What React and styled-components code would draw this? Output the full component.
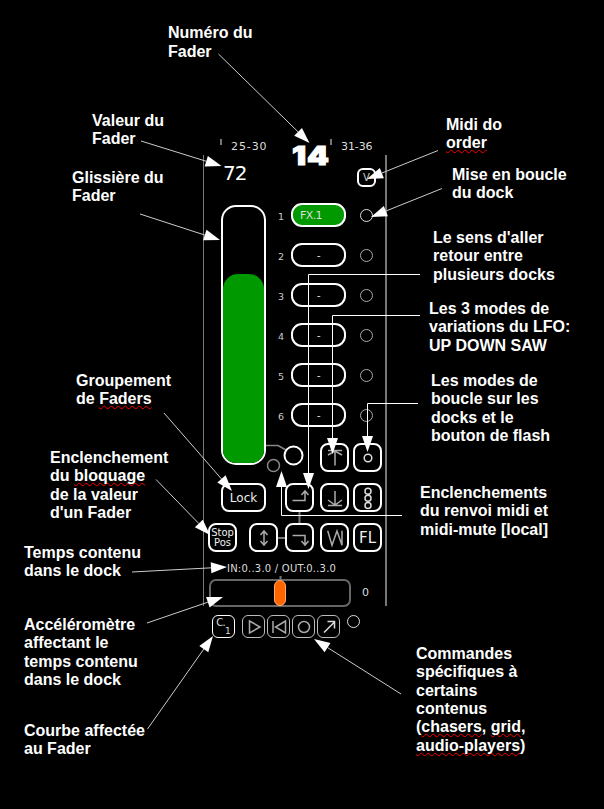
import React from "react";
import styled, { createGlobalStyle } from "styled-components";

const GlobalStyle = createGlobalStyle`
  *, *::before, *::after { box-sizing: border-box; }
  body { margin: 0; background: #000; }
`;

const Page = styled.main`
  position: relative;
  width: 604px;
  height: 809px;
  overflow: hidden;
  background: #000;
  color: #fff;
  font-family: "Liberation Sans", Arial, sans-serif;
`;

const TopArea = styled.header`
  height: 80px;
  padding: 24.4px 0 0 168px;
`;

const Columns = styled.div`
  display: grid;
  grid-template-columns: 203px 184px 1fr;
  height: 729px;
`;

const Notes = styled.div`
  display: flex;
  flex-direction: column;
  align-items: flex-start;
  padding-top: 0.7px;
`;

const Note = styled.p`
  margin: ${(p) => p.$gap || 0}px 0 0 ${(p) => p.$indent || 0}px;
  font-size: 16px;
  font-weight: 700;
  line-height: 18.4px;
  white-space: nowrap;
`;

const Line = styled.span`
  display: block;
  height: 18.4px;
`;

const Misspelt = styled.span`
  text-decoration: underline wavy #f00 1px;
  text-decoration-skip-ink: none;
  text-underline-offset: 1px;
`;

/* ---- fader strip ---- */

const Strip = styled.section`
  display: flex;
  flex-direction: column;
  padding-top: 59px;
  font-family: "DejaVu Sans", sans-serif;
`;

const StripHeader = styled.div`
  display: flex;
  height: 16px;
  padding-left: 17px;
  font-size: 11px;
  line-height: 15px;
  color: #ddd;
`;

const Tick = styled.i`
  width: 2px;
  height: 6px;
  background: #777;
`;

const Range = styled.span`
  width: ${(p) => p.$width}px;
  margin-left: ${(p) => p.$gap}px;
  white-space: nowrap;
  letter-spacing: ${(p) => p.$track}px;
`;

const FaderNumber = styled.strong`
  width: 38px;
  height: 16px;
  font-family: Inter, "DejaVu Sans", sans-serif;
  font-weight: 900;
  font-size: 26px;
  line-height: 33px;
  letter-spacing: 0.8px;
  color: #fff;
  -webkit-text-stroke: 1px #fff;
  transform: scaleX(1.2);
  transform-origin: left;
`;

const Frame = styled.div`
  display: flex;
  flex-direction: column;
  height: 451px;
  border-left: 1px solid #777;
  border-right: 2px solid #777;
`;

const ValueRow = styled.div`
  display: flex;
  flex: none;
  justify-content: space-between;
  height: 48px;
  padding: 7px 9px 0 19px;
`;

const Value = styled.span`
  font-size: 20px;
  line-height: 23px;
  letter-spacing: -0.9px;
`;

const MidiOrder = styled.button`
  width: 19px;
  height: 19px;
  margin-top: 6px;
  padding: 0;
  border: 2px solid #fff;
  border-radius: 6px;
  background: none;
  color: #ccc;
  font: 10px/15px "DejaVu Sans", sans-serif;
`;

const Body = styled.div`
  display: flex;
  flex: none;
  height: 320px;
`;

const SliderColumn = styled.div`
  display: flex;
  flex-direction: column;
  gap: 18px;
  width: 62px;
  padding: 2px 0 0 17px;
`;

const Slider = styled.div`
  display: flex;
  align-items: flex-end;
  flex: none;
  width: 45px;
  height: 260px;
  border: 2px solid #fff;
  border-radius: 15px;
  overflow: hidden;
`;

const SliderFill = styled.div`
  width: 100%;
  background: #009900;
  border-radius: 15px 15px 0 0;
`;

const DockColumn = styled.div`
  display: flex;
  flex-direction: column;
  flex: 1;
`;

const DockRow = styled.div`
  display: flex;
  align-items: center;
  height: 24px;
  margin-bottom: 16px;
  padding-left: 12px;
`;

const DockIndex = styled.span`
  width: 13px;
  padding-top: 3px;
  font-size: 9.5px;
  line-height: 12px;
  color: #ccc;
`;

const Dock = styled.button`
  width: 55px;
  height: 24px;
  padding: ${(p) => (p.$active ? "2px 15px 0 0" : "1px 0 0")};
  border: 2px solid #fff;
  border-radius: 11px;
  background: ${(p) => (p.$active ? "#009900" : "none")};
  color: #ddd;
  font: 11px/18px "DejaVu Sans", sans-serif;
  letter-spacing: -0.6px;
`;

const Ring = styled.i`
  flex: none;
  width: 13px;
  height: 13px;
  margin-left: ${(p) => p.$gap || 0}px;
  border: 1.5px solid ${(p) => (p.$bright ? "#ddd" : "#aaa")};
  border-radius: 50%;
`;

const ButtonRow = styled.div`
  display: flex;
  flex: none;
  align-items: flex-start;
  height: 40px;
`;

const Key = styled.button`
  display: flex;
  align-items: center;
  justify-content: center;
  flex: none;
  width: ${(p) => p.$width || 29}px;
  height: 29px;
  margin-left: ${(p) => p.$gap || 0}px;
  padding: 0;
  border: 2px solid #fff;
  border-radius: 8px;
  background: none;
  color: #eee;
  font: ${(p) => p.$size || 12}px/10px "DejaVu Sans", sans-serif;
`;

const Glyph = styled.svg`
  flex: none;
  display: block;
  fill: none;
  stroke: ${(p) => p.$tone || "#aaa"};
  stroke-width: 1.5;
  overflow: visible;
`;

const Joint = styled.i`
  width: 7px;
  height: 2px;
  margin-top: 14px;
  background: #777;
`;

const Timing = styled.div`
  flex: none;
  height: 16px;
  padding-left: 23px;
  font-size: 10px;
  line-height: 11px;
  letter-spacing: 0.22px;
  color: #ddd;
  white-space: nowrap;
`;

const AccelRow = styled.div`
  display: flex;
  flex: none;
  align-items: center;
  height: 28px;
  padding-left: 5px;
`;

const Accelerometer = styled.div`
  display: flex;
  justify-content: center;
  align-items: center;
  width: 142px;
  height: 28px;
  border: 2px solid #666;
  border-radius: 7px;
`;

const AccelHandle = styled.div`
  flex: none;
  width: 12px;
  height: 26px;
  border: 1px solid #ffab70;
  border-radius: 6px;
  background: #ff6600;
`;

const AccelValue = styled.span`
  margin-left: 11px;
  margin-top: -2px;
  font-size: 11px;
  color: #ddd;
`;

const Transport = styled.div`
  display: flex;
  padding: 9px 0 0 9px;
`;

const SmallKey = styled.button`
  display: flex;
  align-items: center;
  justify-content: center;
  width: 23px;
  height: 23px;
  margin-right: ${(p) => p.$after ?? 2}px;
  padding: 0;
  border: 1px solid ${(p) => (p.$bright ? "#fff" : "#bbb")};
  border-radius: 6px;
  background: none;
  color: #ddd;
  font: 10px/10px "DejaVu Sans", sans-serif;
`;

const CurveIndex = styled.sub`
  align-self: flex-end;
  padding-bottom: 1px;
  font-size: 9px;
  line-height: 10px;
`;

const CurveLetter = styled.span`
  align-self: flex-start;
  padding-top: 2px;
  letter-spacing: -0.8px;
`;

const Arrows = styled.svg`
  position: absolute;
  inset: 0;
  pointer-events: none;
`;

/* Each pointer is a list of points; the last one is the tip. */
const POINTERS = [
  [[218.5, 54], [309.5, 143]],
  [[141, 141], [221.5, 166]],
  [[140, 214], [220, 240]],
  [[164, 413], [232, 491]],
  [[156, 479.5], [210, 535]],
  [[132, 572], [227, 567]],
  [[147, 623], [223, 597]],
  [[147.5, 729], [213, 636]],
  [[438, 150.5], [367, 179]],
  [[442, 188.5], [371, 217]],
  [[401, 694], [314, 639]],
  [[420, 274.5], [308.5, 274.5], [308.5, 489]],
  [[420, 315.5], [332.5, 315.5], [332.5, 454]],
  [[418, 403.5], [367.5, 403.5], [367.5, 452]],
  [[402, 515.5], [281.5, 515.5], [281.5, 471]],
];

function Pointer({ points }) {
  const [x2, y2] = points[points.length - 1];
  const [x1, y1] = points[points.length - 2];
  const len = Math.hypot(x2 - x1, y2 - y1);
  const ux = (x2 - x1) / len;
  const uy = (y2 - y1) / len;
  const bx = x2 - ux * 16;
  const by = y2 - uy * 16;
  const straight = points.length > 2;
  const stem = [...points.slice(0, -1), [bx, by]].map((p) => p.join(",")).join(" ");
  const head = [
    [x2, y2],
    [bx - uy * 5.5, by + ux * 5.5],
    [bx + uy * 5.5, by - ux * 5.5],
  ].map((p) => p.join(",")).join(" ");
  return (
    <g>
      <polyline points={stem} fill="none" stroke={straight ? "#fff" : "#ccc"} strokeWidth="1" />
      <polygon points={head} fill="#fff" />
    </g>
  );
}

const ICONS = {
  up: "M10 17.500V3M3 7L10 3L17 7M3 2.500H17",
  down: "M10 3V17M3 12L10 17L17 12M3 17.500H17",
  dot: "M13.8 10a3.8 3.8 0 1 1-7.6 0a3.8 3.8 0 1 1 7.6 0Z",
  chain:
    "M13 3.200a3 3 0 1 1-6 0a3 3 0 1 1 6 0ZM13 10.300a3 3 0 1 1-6 0a3 3 0 1 1 6 0ZM13 17.400a3 3 0 1 1-6 0a3 3 0 1 1 6 0Z",
  forward: "M2.500 12.500H15V3.500M11.500 7L15 3L18.500 7",
  back: "M2.500 7.500H15V16.500M11.500 13L15 17L18.500 13",
  both: "M10 3V17M6.500 7L10 3L13.500 7M6.500 13L10 17L13.500 13",
  saw: "M2.700 2.700L7 17.300L12 3L17 17.300V2.700",
  play: "M5.500 4L16 10L5.500 16Z",
  prev: "M4 4V16M16.500 4L6.500 10L16.500 16Z",
  record: "M15.500 10a5.500 5.500 0 1 1-11 0a5.500 5.500 0 1 1 11 0Z",
  out: "M5 15.500L15.500 5M8.500 4.500H15.500V11.500",
};

function Icon({ name, tone }) {
  return (
    <Glyph width="20" height="20" viewBox="0 0 20 20" $tone={tone}>
      <path d={ICONS[name]} />
    </Glyph>
  );
}

function Annotation({ lines, gap, indent }) {
  return (
    <Note $gap={gap} $indent={indent}>
      {lines.map((line, i) => (
        <Line key={i}>
          {line.split(/(\*[^*]+\*)/).map((part, j) =>
            part.startsWith("*") ? <Misspelt key={j}>{part.slice(1, -1)}</Misspelt> : part
          )}
        </Line>
      ))}
    </Note>
  );
}

export default function App() {
  return (
    <Page>
      <GlobalStyle />
      <TopArea>
        <Annotation lines={["Numéro du", "Fader"]} />
      </TopArea>
      <Columns>
        <Notes>
          <Annotation gap={31.3} indent={92} lines={["Valeur du", "Fader"]} />
          <Annotation gap={20.2} indent={72} lines={["Glissière du", "Fader"]} />
          <Annotation gap={166.2} indent={76} lines={["Groupement", "de *Faders*"]} />
          <Annotation gap={40.2} indent={50} lines={["Enclenchement", "du *bloquage*", "de la valeur", "d'un Fader"]} />
          <Annotation gap={21.4} indent={24} lines={["Temps contenu", "dans le dock"]} />
          <Annotation gap={35.2} indent={24} lines={["Accéléromètre", "affectant le", "temps contenu", "dans le dock"]} />
          <Annotation gap={32.4} indent={24} lines={["Courbe affectée", "au Fader"]} />
        </Notes>

        <Strip>
          <StripHeader>
            <Tick />
            <Range $width={61} $gap={9} $track={0.9}>25-30</Range>
            <FaderNumber>14</FaderNumber>
            <Tick />
            <Range $width={34} $gap={9} $track={-0.1}>31-36</Range>
          </StripHeader>
          <Frame>
            <ValueRow>
              <Value>72</Value>
              <MidiOrder>V</MidiOrder>
            </ValueRow>
            <Body>
              <SliderColumn>
                <Slider>
                  <SliderFill style={{ height: `${(189 / 256) * 100}%` }} />
                </Slider>
                <Key $width={45}>Lock</Key>
              </SliderColumn>
              <DockColumn>
                {["FX.1", "-", "-", "-", "-", "-"].map((name, i) => (
                  <DockRow key={i}>
                    <DockIndex>{i + 1}</DockIndex>
                    <Dock $active={i === 0}>{name}</Dock>
                    <Ring $gap={14} $bright={i === 0} />
                  </DockRow>
                ))}
                <ButtonRow>
                  <Glyph width="54" height="30" viewBox="0 0 54 30" $tone="#888">
                    <path d="M0 2.500H12L20 7" />
                    <circle cx="7.500" cy="22.500" r="6" />
                    <circle cx="27.500" cy="12.500" r="9" stroke="#fff" strokeWidth="2" />
                  </Glyph>
                  <Key><Icon name="up" /></Key>
                  <Key $gap={4}><Icon name="dot" tone="#ddd" /></Key>
                </ButtonRow>
                <ButtonRow>
                  <Key $gap={19}><Icon name="forward" /></Key>
                  <Key $gap={6}><Icon name="down" /></Key>
                  <Key $gap={4}><Icon name="chain" tone="#ddd" /></Key>
                </ButtonRow>
              </DockColumn>
            </Body>
            <ButtonRow>
              <Key $gap={4} $size={10}>Stop<br />Pos</Key>
              <Key $gap={12}><Icon name="both" /></Key>
              <Joint />
              <Key><Icon name="back" /></Key>
              <Key $gap={6}><Icon name="saw" /></Key>
              <Key $gap={4} $size={15}>FL</Key>
            </ButtonRow>
            <Timing>IN:0..3.0 / OUT:0..3.0</Timing>
            <AccelRow>
              <Accelerometer>
                <AccelHandle />
              </Accelerometer>
              <AccelValue>0</AccelValue>
            </AccelRow>
          </Frame>
          <Transport>
            <SmallKey $bright $after={7}>
              <CurveLetter>C.</CurveLetter>
              <CurveIndex>1</CurveIndex>
            </SmallKey>
            <SmallKey><Icon name="play" /></SmallKey>
            <SmallKey><Icon name="prev" /></SmallKey>
            <SmallKey><Icon name="record" /></SmallKey>
            <SmallKey $after={0}><Icon name="out" tone="#ddd" /></SmallKey>
            <Ring $gap={7} $bright />
          </Transport>
        </Strip>

        <Notes>
          <Annotation gap={35.3} indent={59} lines={["Midi do", "*order*"]} />
          <Annotation gap={13.2} indent={65} lines={["Mise en boucle", "du dock"]} />
          <Annotation gap={26.2} indent={46} lines={["Le sens d'aller", "retour entre", "plusieurs docks"]} />
          <Annotation gap={15.8} indent={42} lines={["Les 3 modes de", "variations du LFO:", "UP DOWN SAW"]} />
          <Annotation gap={16.8} indent={44} lines={["Les modes de", "boucle sur les", "docks et le", "bouton de flash"]} />
          <Annotation gap={38.4} indent={33} lines={["Enclenchements", "du renvoi midi et", "midi-mute [local]"]} />
          <Annotation
            gap={105.8}
            indent={29}
            lines={["Commandes", "spécifiques à", "certains", "contenus", "(*chasers*, *grid*,", "*audio-players*)"]}
          />
        </Notes>
      </Columns>

      <Arrows width="604" height="809" viewBox="0 0 604 809" aria-hidden="true">
        <path d="M299.500 512V523M280.500 576V580" stroke="#777" strokeWidth="2" />
        {POINTERS.map((points, i) => (
          <Pointer key={i} points={points} />
        ))}
      </Arrows>
    </Page>
  );
}
